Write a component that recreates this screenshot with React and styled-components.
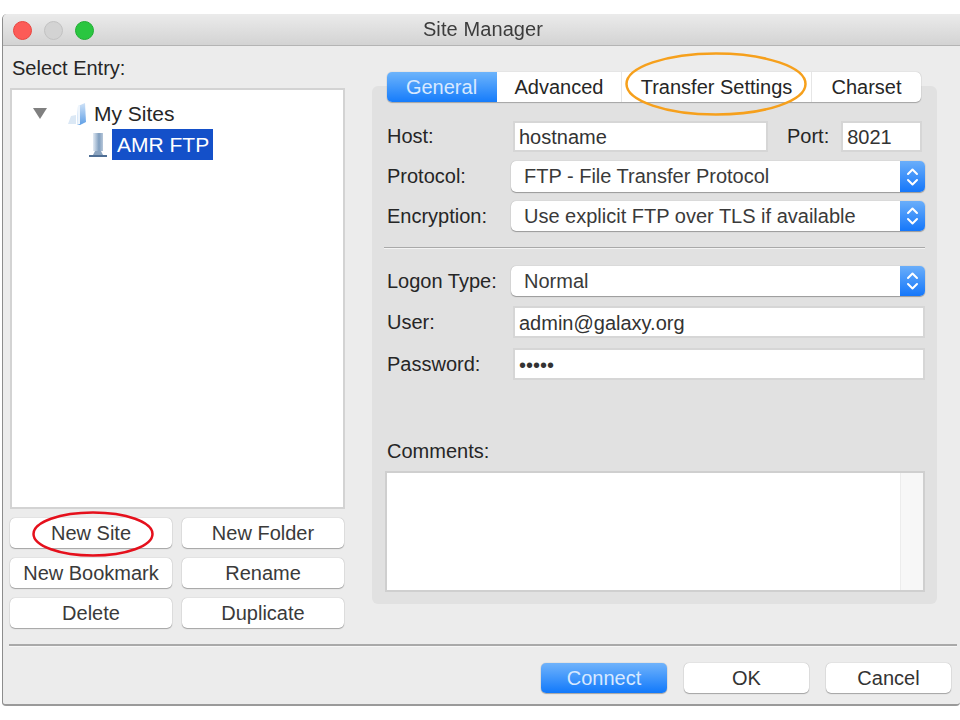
import React from "react";
import styled, { createGlobalStyle } from "styled-components";

const Global = createGlobalStyle`
  html, body { margin: 0; padding: 0; background: #fff; }
  * { box-sizing: border-box; }
  body { font-family: "Liberation Sans", Arial, sans-serif; color: #262626; }
`;

const Page = styled.div`
  width: 960px;
  height: 720px;
  padding: 14px 0 0 2px;
  overflow: hidden;
  background: #fff;
`;

const Window = styled.div`
  position: relative;
  width: 958px;
  height: 692px;
  display: flex;
  flex-direction: column;
  background: #ececec;
  border-left: 1px solid #8d8d8d;
  border-bottom: 2px solid #9a9a9a;
  border-radius: 5px 5px 4px 4px;
  filter: blur(0.45px);
`;

const TitleBar = styled.div`
  position: relative;
  flex: none;
  height: 32px;
  display: flex;
  align-items: center;
  justify-content: center;
  padding-left: 3px;
  font-size: 20px;
  letter-spacing: 0.1px;
  color: #3c3c3c;
  background: linear-gradient(#ebebeb, #d3d3d3);
  border-bottom: 1px solid #b4b4b4;
  border-radius: 5px 0 0 0;
`;

const Lights = styled.div`
  position: absolute;
  left: 10px;
  top: 7px;
  display: flex;
  gap: 12px;
`;

const Light = styled.span`
  width: 19px;
  height: 19px;
  border-radius: 50%;
  background: ${(p) => p.$color};
  border: 1px solid ${(p) => p.$edge};
`;

const Main = styled.div`
  flex: none;
  height: 598px;
  display: flex;
  padding-left: 7px;
`;

const LeftColumn = styled.div`
  flex: none;
  width: 335px;
  display: flex;
  flex-direction: column;
`;

const SelectLabel = styled.div`
  height: 42px;
  padding: 10px 0 0 2px;
  font-size: 20px;
  line-height: 24px;
`;

const Tree = styled.div`
  height: 421px;
  padding: 8px 0 0 21px;
  background: #fff;
  border: 2px solid #d3d3d3;
  font-size: 21px;
`;

const TreeRow = styled.div`
  display: flex;
  align-items: center;
  height: 31px;
  padding-left: ${(p) => p.$indent}px;
`;

const Caret = styled.span`
  width: 0;
  height: 0;
  margin: 0 19px 0 0;
  border-left: 7px solid transparent;
  border-right: 7px solid transparent;
  border-top: 11px solid #808080;
`;

const Selected = styled.span`
  display: flex;
  align-items: center;
  height: 31px;
  margin-left: 4px;
  padding: 0 4px 0 5px;
  background: #1450c9;
  color: #fff;
`;

const ButtonGrid = styled.div`
  margin-top: 9px;
  display: grid;
  grid-template-columns: 162px 162px;
  grid-auto-rows: 30px;
  column-gap: 10px;
  row-gap: 10px;
`;

const PushButton = styled.div`
  display: flex;
  align-items: center;
  justify-content: center;
  background: #fff;
  border-radius: 5px;
  font-size: 20px;
  color: #3a3a3a;
  box-shadow: 0 0 1px rgba(0, 0, 0, 0.35), 0 1px 1px rgba(0, 0, 0, 0.28);
`;

const RightColumn = styled.div`
  flex: none;
  width: 565px;
  margin: 40px 0 0 27px;
`;

const Panel = styled.div`
  width: 565px;
  height: 518px;
  padding: 0 12px 0 15px;
  background: #e1e1e1;
  border-radius: 6px;
  display: flex;
  flex-direction: column;
`;

const Tabs = styled.div`
  flex: none;
  width: 534px;
  height: 30px;
  margin-top: -14px;
  display: flex;
  background: #fff;
  border-radius: 5px;
  box-shadow: 0 0 1px rgba(0, 0, 0, 0.3), 0 1px 1px rgba(0, 0, 0, 0.25);
`;

const Tab = styled.div`
  flex: none;
  width: ${(p) => p.$w}px;
  display: flex;
  align-items: center;
  justify-content: center;
  font-size: 20px;
  color: ${(p) => (p.$active ? "#d8e9ff" : "#262626")};
  border-right: 1px solid ${(p) => (p.$active ? "transparent" : "#e6e6e6")};
  background: ${(p) => (p.$active ? "linear-gradient(#6db4fb, #167cfb)" : "transparent")};
  border-radius: ${(p) => (p.$active ? "5px 0 0 5px" : "0")};
  &:last-child { border-right: 0; }
`;

const Row = styled.div`
  flex: none;
  display: flex;
  align-items: center;
  height: ${(p) => p.$h || 31}px;
  margin-top: ${(p) => p.$top}px;
`;

const Label = styled.label`
  flex: none;
  width: ${(p) => p.$w || 124}px;
  font-size: 20px;
  color: #262626;
`;

const Field = styled.input`
  display: block;
  width: ${(p) => (p.$w ? `${p.$w}px` : "auto")};
  flex: ${(p) => (p.$w ? "none" : "1")};
  min-width: 0;
  height: 100%;
  margin: 0 0 0 ${(p) => p.$left || 2}px;
  padding: 2px 0 0 4px;
  background: #fff;
  border: 2px solid #d6d6d6;
  border-radius: 0;
  outline: 0;
  font: 20px "Liberation Sans", Arial, sans-serif;
  color: #333;
`;

const PortLabel = styled.label`
  flex: none;
  margin-left: 19px;
  font-size: 20px;
  color: #262626;
`;

const Select = styled.div`
  flex: 1;
  height: 100%;
  display: flex;
  align-items: stretch;
  background: #fff;
  border-radius: 5px;
  box-shadow: 0 0 1px rgba(0, 0, 0, 0.3), 0 1px 1px rgba(0, 0, 0, 0.3);
`;

const SelectText = styled.div`
  flex: 1;
  display: flex;
  align-items: center;
  padding-left: 13px;
  font-size: 20px;
  color: #3a3a3a;
`;

const SelectArrows = styled.div`
  flex: none;
  width: 25px;
  display: flex;
  align-items: center;
  justify-content: center;
  background: linear-gradient(#6aaefa, #1577fa);
  border-radius: 0 5px 5px 0;
`;

const Rule = styled.div`
  flex: none;
  height: 2px;
  margin: ${(p) => p.$top}px 0 0 -3px;
  background: linear-gradient(#a9a9a9 50%, #f3f3f3 50%);
`;

const CommentsLabel = styled.div`
  flex: none;
  height: 24px;
  margin-top: 59px;
  font-size: 20px;
  line-height: 24px;
  color: #262626;
`;

const Comments = styled.div`
  flex: none;
  height: 121px;
  margin: 8px 0 0 -2px;
  display: flex;
  justify-content: flex-end;
  background: #fff;
  border: 2px solid #cfcfcf;
`;

const ScrollTrack = styled.div`
  width: 23px;
  background: #f7f7f7;
  border-left: 1px solid #ececec;
`;

const Footer = styled.div`
  flex: 1;
  margin-left: 6px;
  margin-right: 3px;
  padding: 17px 6px 0 0;
  display: flex;
  justify-content: flex-end;
  gap: 17px;
  border-top: 2px solid #a9a9a9;
  box-shadow: inset 0 1px 0 #f6f6f6;
`;

const FooterButton = styled(PushButton)`
  width: ${(p) => p.$w}px;
  height: 30px;
  color: ${(p) => (p.$primary ? "#d8e9ff" : "#333")};
  background: ${(p) => (p.$primary ? "linear-gradient(#70b3fb, #1179fb)" : "#fff")};
`;

const Annotation = styled.svg`
  position: absolute;
  left: 0;
  top: 0;
  pointer-events: none;
`;

const Chevrons = () => (
  <svg width="15" height="22" viewBox="0 0 15 22" fill="none" stroke="#fff" strokeWidth="2" strokeLinecap="round" strokeLinejoin="round">
    <path d="M3 8 L7.5 3.5 L12 8" />
    <path d="M3 14 L7.5 18.5 L12 14" />
  </svg>
);

const FolderIcon = () => (
  <svg width="22" height="24" viewBox="0 0 22 24" style={{ flex: "none", marginRight: 6 }}>
    <defs>
      <linearGradient id="fg" x1="0" y1="0" x2="0" y2="1">
        <stop offset="0" stopColor="#cfe2f7" />
        <stop offset="1" stopColor="#5f9fe6" />
      </linearGradient>
    </defs>
    <path d="M2 22 L5 14 L10 13 L10 22 Z" fill="#dbe8f5" />
    <path d="M12 4 L19 1 L20 20 L14 23 L11 23 Z" fill="url(#fg)" />
    <path d="M12 4 L14 3 L14 22 L11 23 Z" fill="#eef5fc" />
  </svg>
);

const ServerIcon = () => (
  <svg width="20" height="26" viewBox="0 0 20 26" style={{ flex: "none" }}>
    <defs>
      <linearGradient id="sg" x1="0" y1="0" x2="1" y2="0">
        <stop offset="0" stopColor="#e3ebf4" />
        <stop offset="0.6" stopColor="#7f9dbe" />
        <stop offset="1" stopColor="#b8c8da" />
      </linearGradient>
    </defs>
    <rect x="5" y="1" width="10" height="18" fill="url(#sg)" />
    <path d="M7 19 H13 L15 23 H5 Z" fill="#8aa3bf" />
    <rect x="1" y="23" width="18" height="2" fill="#4f6f95" />
  </svg>
);

const SelectBox = ({ children }) => (
  <Select>
    <SelectText>{children}</SelectText>
    <SelectArrows>
      <Chevrons />
    </SelectArrows>
  </Select>
);

export default function App() {
  return (
    <Page>
      <Global />
      <Window>
        <TitleBar>
          <Lights>
            <Light $color="#fc5b57" $edge="#e9453f" />
            <Light $color="#d3d3d3" $edge="#c2c2c2" />
            <Light $color="#2ac640" $edge="#20ad33" />
          </Lights>
          Site Manager
        </TitleBar>
        <Main>
          <LeftColumn>
            <SelectLabel>Select Entry:</SelectLabel>
            <Tree>
              <TreeRow $indent={0}>
                <Caret />
                <FolderIcon />
                My Sites
              </TreeRow>
              <TreeRow $indent={55}>
                <ServerIcon />
                <Selected>AMR FTP</Selected>
              </TreeRow>
            </Tree>
            <ButtonGrid>
              <PushButton>New Site</PushButton>
              <PushButton>New Folder</PushButton>
              <PushButton>New Bookmark</PushButton>
              <PushButton>Rename</PushButton>
              <PushButton>Delete</PushButton>
              <PushButton>Duplicate</PushButton>
            </ButtonGrid>
          </LeftColumn>
          <RightColumn>
            <Panel>
              <Tabs>
                <Tab $w={110} $active>General</Tab>
                <Tab $w={125}>Advanced</Tab>
                <Tab $w={190}>Transfer Settings</Tab>
                <Tab $w={109}>Charset</Tab>
              </Tabs>
              <Row $top={19}>
                <Label>Host:</Label>
                <Field $w={255} readOnly value="hostname" />
                <PortLabel>Port:</PortLabel>
                <Field $w={81} $left={12} readOnly value="8021" />
              </Row>
              <Row $top={9}>
                <Label>Protocol:</Label>
                <SelectBox>FTP - File Transfer Protocol</SelectBox>
              </Row>
              <Row $top={9} $h={30}>
                <Label>Encryption:</Label>
                <SelectBox>Use explicit FTP over TLS if available</SelectBox>
              </Row>
              <Rule $top={16} />
              <Row $top={17} $h={30}>
                <Label>Logon Type:</Label>
                <SelectBox>Normal</SelectBox>
              </Row>
              <Row $top={10} $h={32}>
                <Label>User:</Label>
                <Field readOnly value="admin@galaxy.org" />
              </Row>
              <Row $top={10} $h={32}>
                <Label>Password:</Label>
                <Field type="password" readOnly value="admin" />
              </Row>
              <CommentsLabel>Comments:</CommentsLabel>
              <Comments>
                <ScrollTrack />
              </Comments>
            </Panel>
          </RightColumn>
        </Main>
        <Footer>
          <FooterButton $w={126} $primary>Connect</FooterButton>
          <FooterButton $w={125}>OK</FooterButton>
          <FooterButton $w={125}>Cancel</FooterButton>
        </Footer>
        <Annotation width="958" height="692" viewBox="0 0 958 692" fill="none">
          <ellipse cx="713" cy="70" rx="89.5" ry="30.5" stroke="#f6a01c" strokeWidth="2.5" />
          <ellipse cx="90" cy="520" rx="59.5" ry="21.5" stroke="#e5101c" strokeWidth="2.5" />
        </Annotation>
      </Window>
    </Page>
  );
}
